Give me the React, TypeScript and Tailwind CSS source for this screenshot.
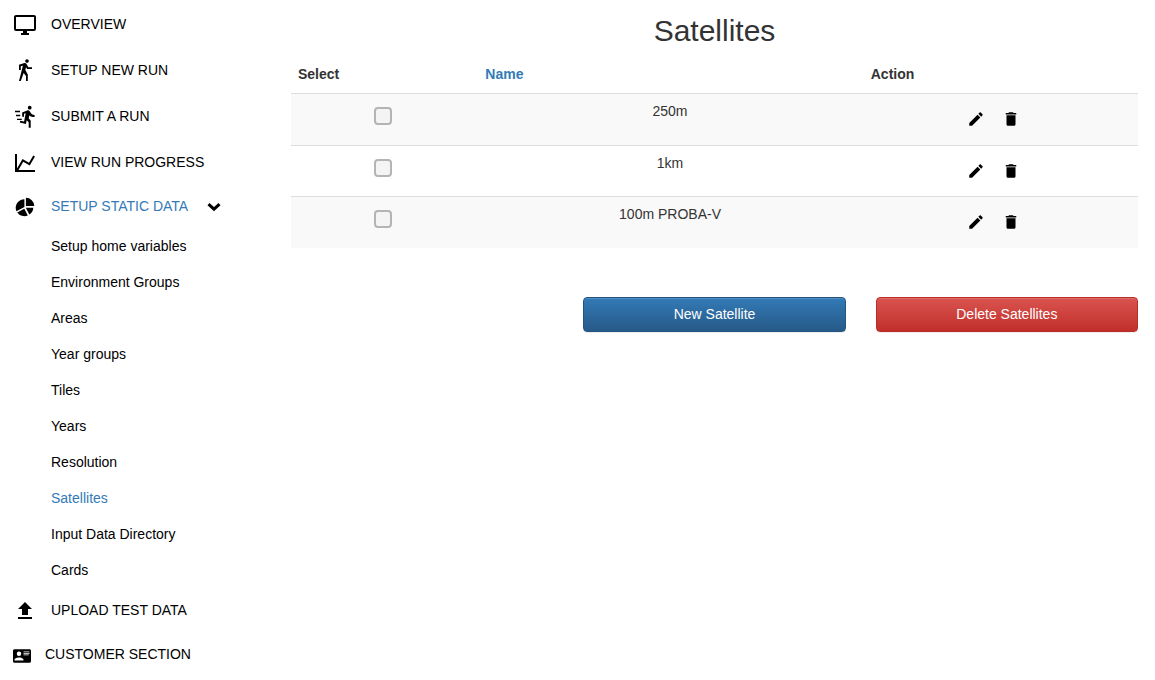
import { useState } from "react";

const ICONS = {
  monitor:
    "M21,16H3V4H21M21,2H3C1.89,2 1,2.89 1,4V16A2,2 0 0,0 3,18H10V20H8V22H16V20H14V18H21A2,2 0 0,0 23,16V4C23,2.89 22.1,2 21,2Z",
  walk: "M14.12,10H19V8.2H15.38L13.38,4.87C13.08,4.37 12.54,4.03 11.92,4.03C11.74,4.03 11.58,4.06 11.42,4.11L6,5.8V11H7.8V7.33L9.91,6.67L6,22H7.8L10.67,13.89L13,17V22H14.8V15.59L12.31,11.05L13.04,8.18M14,3.8C15,3.8 15.8,3 15.8,2C15.8,1 15,0.2 14,0.2C13,0.2 12.2,1 12.2,2C12.2,3 13,3.8 14,3.8Z",
  run: "M16.7,4.6A1.9,1.9 0 0,0 18.6,2.7A1.9,1.9 0 0,0 16.7,0.8A1.9,1.9 0 0,0 14.8,2.7A1.9,1.9 0 0,0 16.7,4.6M12.9,18.9L13.7,15.2L15.7,17.2V22.7H17.7V15.5L15.7,13.4L16.3,10.4C17.6,11.5 19.4,11.9 21.6,11.9V10C19.8,10 18.6,9.3 17.7,7.8L16.7,6.2C16.3,5.6 15.7,5.2 15,5.2L14.2,5.4L9.2,7.4V11.8H11V8.8L12.7,8.2L11.1,16.5L7.2,15.7L6.8,17.5L12.9,18.9M2,5.8H7V7.2H2V5.8M3,9.8H7.2V11.2H3V9.8M4,13.7H8.8V15.1H4V13.7Z",
  chart:
    "M16,11.78L20.24,4.45L21.97,5.45L16.74,14.5L10.23,10.75L5.46,19H22V21H2V3H4V17.54L9.5,8L16,11.78Z",
  pie: "M12.9,2.8A8.4,8.4 0 0,1 21.3,11.1H12.9V2.8M11.4,4.2V12L3.4,16.2A8.6,8.6 0 0,1 11.4,4.2M4.2,17.5L11.3,13.7L14.8,20.4A8.6,8.6 0 0,1 4.2,17.5M12.8,12.8H20.3A8.6,8.6 0 0,1 16.3,19.6L12.8,12.8Z",
  upload: "M9,16V10H5L12,3L19,10H15V16H9M5,20V18H19V20H5Z",
  card: "M2,3H22C23.05,3 24,3.95 24,5V19C24,20.05 23.05,21 22,21H2C0.95,21 0,20.05 0,19V5C0,3.95 0.95,3 2,3M14,6V7H22V6H14M14,8V9H21.5L22,9V8H14M14,10V11H21V10H14M8,13.91C6,13.91 2,15 2,17V18H14V17C14,15 10,13.91 8,13.91M8,6A3,3 0 0,0 5,9A3,3 0 0,0 8,12A3,3 0 0,0 11,9A3,3 0 0,0 8,6Z",
  pencil:
    "M20.71,7.04C21.1,6.65 21.1,6 20.71,5.63L18.37,3.29C18,2.9 17.35,2.9 16.96,3.29L15.12,5.12L18.87,8.87M3,17.25V21H6.75L17.81,9.93L14.06,6.18L3,17.25Z",
  trash:
    "M19,4H15.5L14.5,3H9.5L8.5,4H5V6H19M6,19A2,2 0 0,0 8,21H16A2,2 0 0,0 18,19V7H6V19Z",
};

function Icon({ name, className }: { name: keyof typeof ICONS; className: string }) {
  return (
    <svg viewBox="0 0 24 24" fill="currentColor" fillRule="evenodd" aria-hidden="true" className={className}>
      <path d={ICONS[name]} />
    </svg>
  );
}

const topLinks: { icon: keyof typeof ICONS; label: string }[] = [
  { icon: "monitor", label: "OVERVIEW" },
  { icon: "walk", label: "SETUP NEW RUN" },
  { icon: "run", label: "SUBMIT A RUN" },
  { icon: "chart", label: "VIEW RUN PROGRESS" },
];

const staticData = [
  "Setup home variables",
  "Environment Groups",
  "Areas",
  "Year groups",
  "Tiles",
  "Years",
  "Resolution",
  "Satellites",
  "Input Data Directory",
  "Cards",
];

const satellites = ["250m", "1km", "100m PROBA-V"];

function Sidebar() {
  const [open, setOpen] = useState(true);
  return (
    <nav className="w-[261px] shrink-0 pt-px text-black">
      <ul>
        {topLinks.map(({ icon, label }) => (
          <li key={label}>
            <a href="#" className="flex h-[46px] items-center gap-[14px] pl-[13px]">
              <Icon name={icon} className="mt-[2px] size-6" />
              {label}
            </a>
          </li>
        ))}
        <li>
          <button
            type="button"
            aria-expanded={open}
            onClick={() => setOpen(!open)}
            className="flex h-[43px] items-center gap-[14px] pb-[2px] pl-[13px] text-[#337ab7]"
          >
            <Icon name="pie" className="mt-[2px] size-6 text-black" />
            SETUP STATIC DATA
            <svg viewBox="0 0 14 10" aria-hidden="true" className="ml-[5px] mt-[2px] h-[10px] w-[14px] text-black">
              <path d="M1.5 2.2 7 7.2 12.5 2.2" fill="none" stroke="currentColor" strokeWidth="3" />
            </svg>
          </button>
          {open && (
            <ul>
              {staticData.map((label) => (
                <li key={label}>
                  <a
                    href="#"
                    className={
                      label === "Satellites"
                        ? "flex h-9 items-center pl-[51px] text-[#337ab7]"
                        : "flex h-9 items-center pl-[51px]"
                    }
                  >
                    {label}
                  </a>
                </li>
              ))}
            </ul>
          )}
        </li>
        <li>
          <a href="#" className="flex h-11 items-center gap-[14px] pl-[13px]">
            <Icon name="upload" className="mt-[2px] size-6" />
            UPLOAD TEST DATA
          </a>
        </li>
        <li>
          <a href="#" className="flex h-11 items-center gap-[14px] pl-[13px]">
            <Icon name="card" className="mt-[4px] size-[18px]" />
            CUSTOMER SECTION
          </a>
        </li>
      </ul>
    </nav>
  );
}

export default function App() {
  return (
    <div className="flex bg-white font-['Liberation_Sans',Arial,sans-serif] text-[14px] leading-5 text-[#333]">
      <Sidebar />
      <main className="min-w-0 flex-1 pt-[14px] pr-[17px] pl-[30px]">
        <h1 className="text-center text-[30px] leading-[33px]">Satellites</h1>
        <table className="mt-[9px] w-full table-fixed border-collapse">
          <colgroup>
            <col className="w-[22%]" />
            <col />
            <col className="w-[32.5%]" />
          </colgroup>
          <thead>
            <tr className="h-[37px] text-left">
              <th scope="col" className="px-[7px]">Select</th>
              <th scope="col" className="px-2">
                <a href="#" className="text-[#337ab7]">Name</a>
              </th>
              <th scope="col" className="px-2">Action</th>
            </tr>
          </thead>
          <tbody>
            {satellites.map((name) => (
              <tr key={name} className="h-[52px] border-t border-[#ddd] align-top odd:bg-[#f9f9f9] even:h-[51px]">
                <td className="pt-[13px] pr-[2px]">
                  <input
                    type="checkbox"
                    aria-label={`Select ${name}`}
                    className="mx-auto block size-[18px] appearance-none rounded-[4px] border-2 border-[#b4b4b4] bg-[#f4f4f4] checked:bg-[#337ab7]"
                  />
                </td>
                <td className="pt-[7px] text-center">{name}</td>
                <td className="pt-4 pr-[14px]">
                  <div className="flex justify-center gap-[17px] text-black">
                    <button type="button" aria-label={`Edit ${name}`}>
                      <Icon name="pencil" className="size-[18px]" />
                    </button>
                    <button type="button" aria-label={`Delete ${name}`}>
                      <Icon name="trash" className="size-[18px]" />
                    </button>
                  </div>
                </td>
              </tr>
            ))}
          </tbody>
        </table>
        <div className="mt-[49px] grid grid-cols-3 gap-[30px] text-white">
          <button
            type="button"
            className="col-start-2 h-[35px] rounded-[4px] border border-[#245580] bg-linear-to-b from-[#337ab7] to-[#265a88] pb-[2px] shadow-[inset_0_1px_0_rgba(255,255,255,0.15),0_1px_1px_rgba(0,0,0,0.075)]"
          >
            New Satellite
          </button>
          <button
            type="button"
            className="h-[35px] rounded-[4px] border border-[#b92c28] bg-linear-to-b from-[#d9534f] to-[#c12e2a] pb-[2px] shadow-[inset_0_1px_0_rgba(255,255,255,0.15),0_1px_1px_rgba(0,0,0,0.075)]"
          >
            Delete Satellites
          </button>
        </div>
      </main>
    </div>
  );
}
